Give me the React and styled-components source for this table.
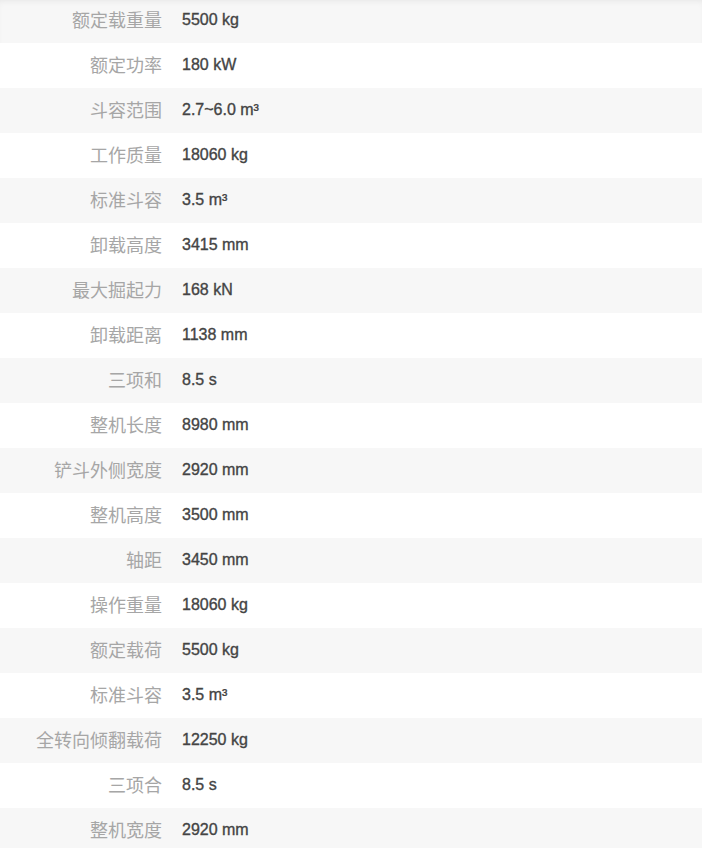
import React from 'react'
import styled, { createGlobalStyle } from 'styled-components'

const GlobalStyle = createGlobalStyle`
  html, body { margin: 0; padding: 0; background: #fff; }
  body { font-family: "Liberation Sans", Arial, "Noto Sans CJK SC", sans-serif; }
`

const SpecList = styled.dl`
  margin: -2px 0 0 0;
  padding: 0;
`

const Row = styled.div`
  display: grid;
  grid-template-columns: 162px 1fr;
  column-gap: 20px;
  align-items: center;
  height: 45px;
  background: ${p => (p.$striped ? '#f7f7f7' : '#fff')};
  ${p => p.$first && 'box-shadow: inset 0 6px 6px -3px rgba(0,0,0,0.07);'}
`

const Label = styled.dt`
  margin: 0;
  padding-bottom: 3px;
  text-align: right;
  font-family: "Noto Sans CJK SC", "Liberation Sans", sans-serif;
  font-size: 18px;
  line-height: 24px;
  color: #a6a6a6;
  white-space: nowrap;
`

const Value = styled.dd`
  margin: 0;
  padding-bottom: 2px;
  font-family: "Liberation Sans", Arial, sans-serif;
  font-size: 16px;
  line-height: 20px;
  font-weight: 400;
  color: #444;
  -webkit-text-stroke: 0.35px #444;
`

const specs = [
  ['额定载重量', '5500 kg'],
  ['额定功率', '180 kW'],
  ['斗容范围', '2.7~6.0 m³'],
  ['工作质量', '18060 kg'],
  ['标准斗容', '3.5 m³'],
  ['卸载高度', '3415 mm'],
  ['最大掘起力', '168 kN'],
  ['卸载距离', '1138 mm'],
  ['三项和', '8.5 s'],
  ['整机长度', '8980 mm'],
  ['铲斗外侧宽度', '2920 mm'],
  ['整机高度', '3500 mm'],
  ['轴距', '3450 mm'],
  ['操作重量', '18060 kg'],
  ['额定载荷', '5500 kg'],
  ['标准斗容', '3.5 m³'],
  ['全转向倾翻载荷', '12250 kg'],
  ['三项合', '8.5 s'],
  ['整机宽度', '2920 mm'],
]

export default function App() {
  return (
    <>
      <GlobalStyle />
      <SpecList>
        {specs.map(([k, v], i) => (
          <Row key={i} $striped={i % 2 === 0} $first={i === 0}>
            <Label>{k}</Label>
            <Value>{v}</Value>
          </Row>
        ))}
      </SpecList>
    </>
  )
}
